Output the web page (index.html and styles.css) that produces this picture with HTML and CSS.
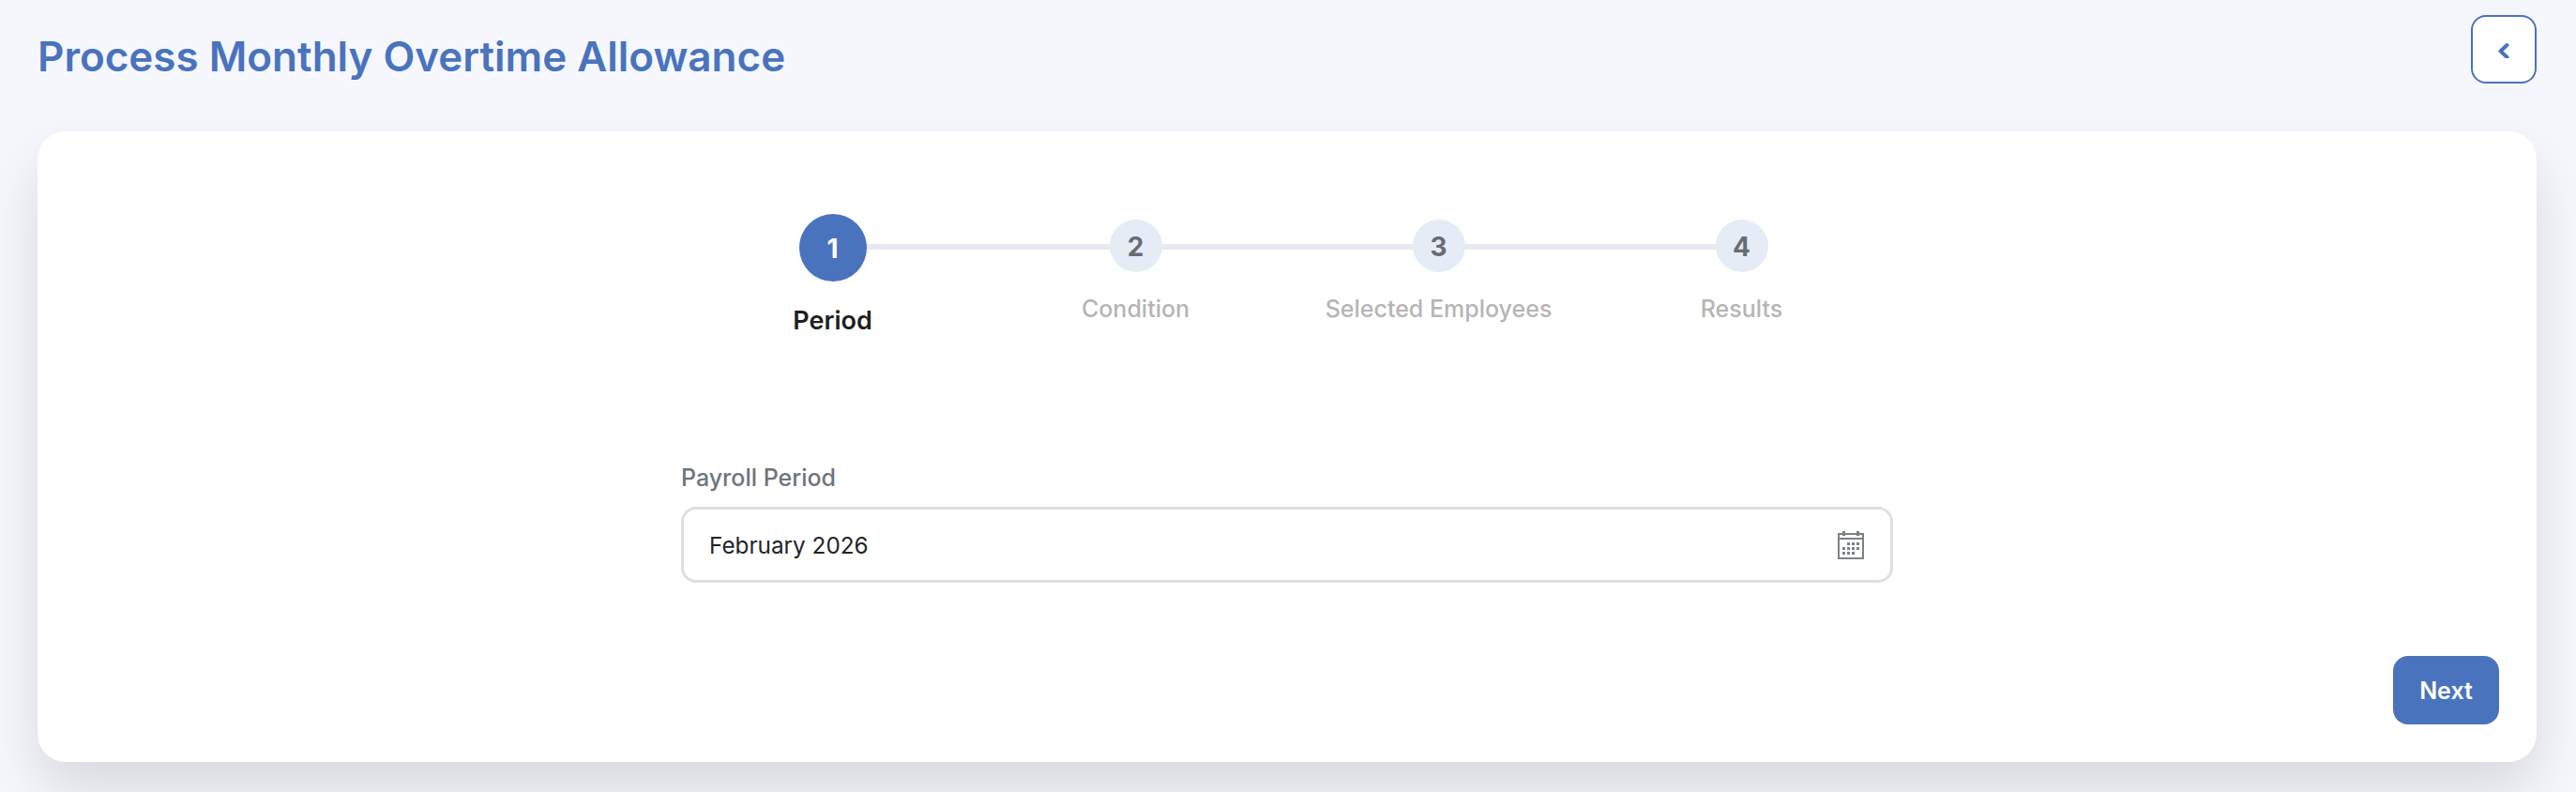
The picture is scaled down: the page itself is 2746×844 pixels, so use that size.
FILE: index.html
```html
<!DOCTYPE html>
<html lang="en">
<head>
    <meta charset="UTF-8">
    <meta name="viewport" content="width=device-width, initial-scale=1.0">
    <title>Process Monthly Overtime Allowance</title>
    <link rel="stylesheet" href="styles.css">
</head>
<body>
    <div class="page">
        <!-- Page title and back button -->
        <div class="page-header">
            <h1>Process Monthly Overtime Allowance</h1>
            <button class="back-button" aria-label="Back">
                <svg width="14" height="18" viewBox="0 -1.5 14 18">
                    <path d="M10.5 2.5 L3.5 9 L10.5 15.5" fill="none" stroke="#4a73bd" stroke-width="4" stroke-linecap="round" stroke-linejoin="round"/>
                </svg>
            </button>
        </div>

        <div class="card">
            <!-- Stepper -->
            <div class="stepper">
                <div class="step active">
                    <div class="step-circle">1</div>
                    <div class="step-label">Period</div>
                </div>
                <div class="step">
                    <div class="step-circle">2</div>
                    <div class="step-label">Condition</div>
                </div>
                <div class="step">
                    <div class="step-circle">3</div>
                    <div class="step-label">Selected Employees</div>
                </div>
                <div class="step">
                    <div class="step-circle">4</div>
                    <div class="step-label">Results</div>
                </div>
            </div>

            <!-- Period field -->
            <div class="field">
                <div class="field-label">Payroll Period</div>
                <div class="field-input">
                    <span>February 2026</span>
                    <svg width="28" height="30" viewBox="0 0 28 30" fill="#7b8287">
                        <rect x="1" y="3" width="26" height="26" fill="none" stroke="#7b8287" stroke-width="2"/>
                        <rect x="1" y="7" width="26" height="2"/>
                        <rect x="5" y="0" width="3" height="5"/>
                        <rect x="20" y="0" width="3" height="5"/>
                        <rect x="10" y="12" width="3" height="3"/>
                        <rect x="15" y="12" width="3" height="3"/>
                        <rect x="20" y="12" width="3" height="3"/>
                        <rect x="5" y="17" width="3" height="3"/>
                        <rect x="10" y="17" width="3" height="3"/>
                        <rect x="15" y="17" width="3" height="3"/>
                        <rect x="20" y="17" width="3" height="3"/>
                        <rect x="5" y="22" width="3" height="3"/>
                        <rect x="10" y="22" width="3" height="3"/>
                        <rect x="15" y="22" width="3" height="3"/>
                    </svg>
                </div>
            </div>

            <div class="card-actions">
                <button class="next-button">Next</button>
            </div>
        </div>
    </div>
</body>
</html>
```

FILE: styles.css
```css
body, html {
    margin: 0;
    padding: 0;
    height: 100%;
    overflow: hidden;
    font-family: Inter, Arial, sans-serif;
    background-color: #f5f7fc;
}

.page {
    padding: 16px 42px 0 40px;
}

.page-header {
    display: flex;
    justify-content: space-between;
    align-items: flex-start;
    height: 124px;
}

.page-header h1 {
    margin: 20px 0 0 0;
    font-size: 44px;
    line-height: 48px;
    font-weight: 600;
    color: #4a73bd;
}

.back-button {
    width: 70px;
    height: 73px;
    padding: 0;
    display: flex;
    align-items: center;
    justify-content: center;
    background-color: #fff;
    border: 2px solid #4a73bd;
    border-radius: 16px;
}

.card {
    height: 672px;
    box-sizing: border-box;
    padding-top: 88px;
    background-color: #fff;
    border-radius: 30px;
    box-shadow: 0 30px 60px rgba(0, 0, 0, 0.12);
}

.stepper {
    display: flex;
    justify-content: center;
}

.step {
    position: relative;
    width: 323px;
    display: flex;
    flex-direction: column;
    align-items: center;
    padding-top: 6px;
    color: #b5b5b5;
}

/* connector line to the next step */
.step:not(:last-child)::after {
    content: "";
    position: absolute;
    top: 32px;
    left: 50%;
    width: 100%;
    height: 6px;
    background-color: #e8e8f1;
}

.step-circle {
    position: relative;
    z-index: 1;
    width: 56px;
    height: 56px;
    box-sizing: border-box;
    padding-top: 1px;
    border-radius: 50%;
    display: flex;
    align-items: center;
    justify-content: center;
    background-color: #e6ecf6;
    color: #676d73;
    font-size: 28px;
    font-weight: 700;
}

.step-label {
    margin-top: 23px;
    font-size: 25px;
    line-height: 32px;
    font-weight: 500;
}

.step.active {
    padding-top: 0;
    color: #1f1f1f;
}

.step.active .step-circle {
    width: 72px;
    height: 72px;
    padding-top: 2px;
    background-color: #4a73bd;
    color: #fff;
}

.step.active .step-label {
    margin-top: 26px;
    font-size: 27px;
    font-weight: 600;
}

.field {
    width: 1292px;
    margin: 135px auto 0;
}

.field-label {
    font-size: 25px;
    line-height: 32px;
    font-weight: 500;
    color: #6c757d;
}

.field-input {
    height: 81px;
    box-sizing: border-box;
    margin-top: 15px;
    padding: 0 28px 0 27px;
    display: flex;
    align-items: center;
    justify-content: space-between;
    border: 3px solid #dbe0e3;
    border-radius: 16px;
    font-size: 24.3px;
    color: #212529;
}

.card-actions {
    display: flex;
    justify-content: flex-end;
    margin-top: 78px;
    padding-right: 40px;
}

.next-button {
    width: 113px;
    height: 73px;
    background-color: #4a73bd;
    color: #fff;
    border: none;
    border-radius: 16px;
    font-family: inherit;
    font-size: 25px;
    font-weight: 600;
}
```
